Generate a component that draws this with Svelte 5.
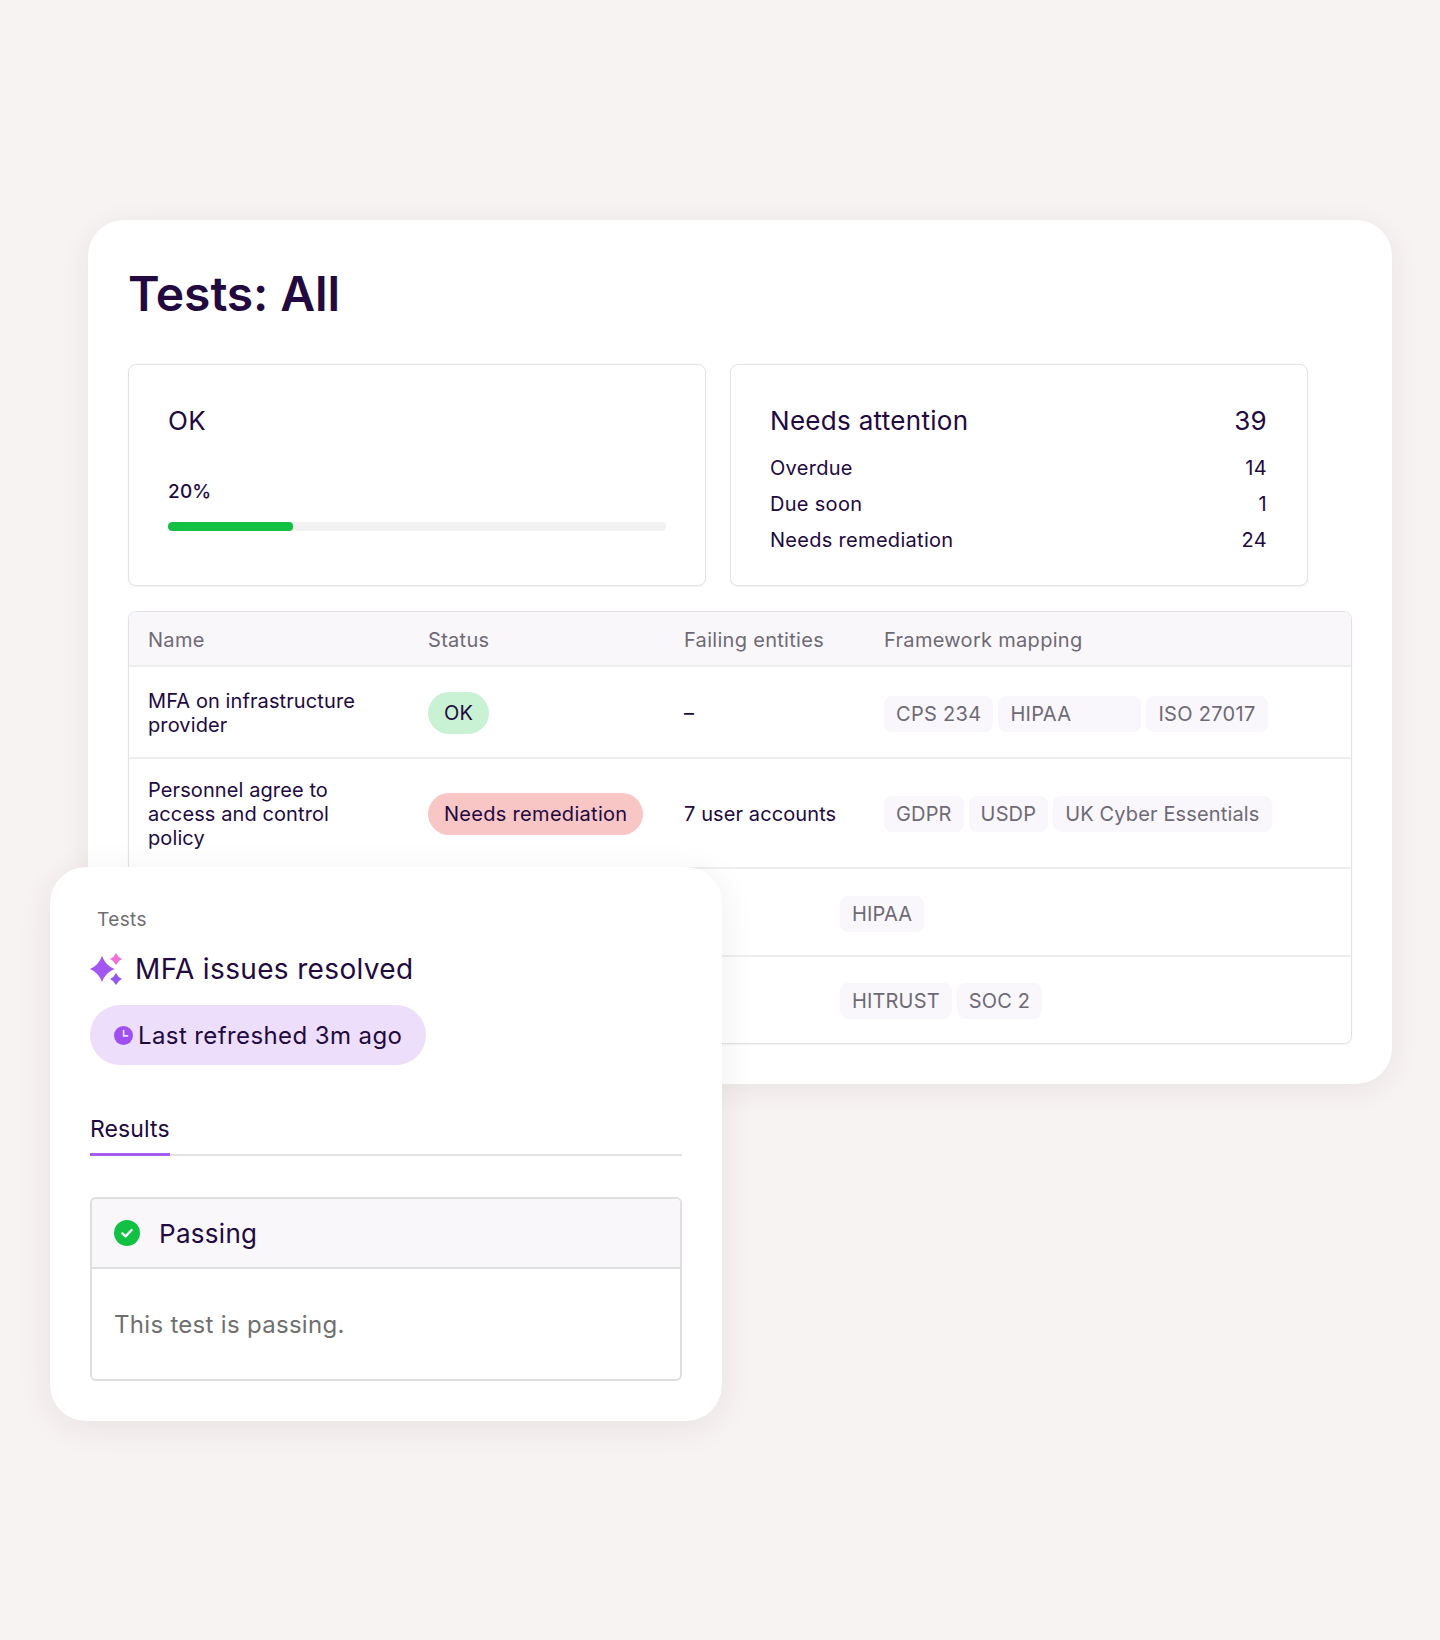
<script lang="ts">
  type Tag = { label: string; width?: number };
  type Row = {
    name: string[];
    status?: { label: string; tone: string };
    failing?: string;
    tags: Tag[];
    kind: string;
  };

  const attention = [
    { label: "Overdue", count: 14 },
    { label: "Due soon", count: 1 },
    { label: "Needs remediation", count: 24 },
  ];

  const rows: Row[] = [
    {
      name: ["MFA on infrastructure", "provider"],
      status: { label: "OK", tone: "ok" },
      failing: "–",
      tags: [{ label: "CPS 234" }, { label: "HIPAA", width: 143 }, { label: "ISO 27017" }],
      kind: "first",
    },
    {
      name: ["Personnel agree to", "access and control", "policy"],
      status: { label: "Needs remediation", tone: "bad" },
      failing: "7 user accounts",
      tags: [{ label: "GDPR" }, { label: "USDP" }, { label: "UK Cyber Essentials" }],
      kind: "second",
    },
    { name: [], tags: [{ label: "HIPAA" }], kind: "short" },
    { name: [], tags: [{ label: "HITRUST" }, { label: "SOC 2" }], kind: "short" },
  ];
</script>

<div class="page">
  <section class="main-card">
    <h1>Tests: All</h1>

    <div class="stats">
      <div class="stat">
        <div class="stat-title">OK</div>
        <div class="percent">20%</div>
        <div class="bar"><div class="bar-fill" style="width: 25%"></div></div>
      </div>
      <div class="stat wide-right">
        <div class="stat-title split"><span>Needs attention</span><span>39</span></div>
        <div class="attention">
          {#each attention as item}
            <div class="split"><span>{item.label}</span><span>{item.count}</span></div>
          {/each}
        </div>
      </div>
    </div>

    <div class="table">
      <div class="thead">
        <span>Name</span>
        <span>Status</span>
        <span>Failing entities</span>
        <span>Framework mapping</span>
      </div>
      {#each rows as row}
        <div class="row {row.kind}">
          {#if row.kind === "short"}
            <div class="tags">
              {#each row.tags as tag}
                <span class="tag">{tag.label}</span>
              {/each}
            </div>
          {:else}
            <div class="name">
              {#each row.name as line}<div>{line}</div>{/each}
            </div>
            <div><span class="pill {row.status?.tone}">{row.status?.label}</span></div>
            <div class="failing">{row.failing}</div>
            <div class="tags">
              {#each row.tags as tag}
                <span class="tag" style={tag.width ? `width: ${tag.width}px` : undefined}>{tag.label}</span>
              {/each}
            </div>
          {/if}
        </div>
      {/each}
    </div>
  </section>

  <section class="float-card">
    <div class="crumb">Tests</div>
    <div class="float-title">
      <svg width="34" height="34" viewBox="0 0 34 34" aria-hidden="true">
        <path d="M12 4 Q15.5 13.5 24.5 17 Q15.5 20.5 12 30 Q8.5 20.5 0 17 Q8.5 13.5 12 4Z" fill="#a356f2" />
        <path d="M26 1 Q27.8 5.2 32 7 Q27.8 8.8 26 13 Q24.2 8.8 20 7 Q24.2 5.2 26 1Z" fill="#ec72d8" />
        <path d="M26 21 Q27.8 25.2 32 27 Q27.8 28.8 26 33 Q24.2 28.8 20 27 Q24.2 25.2 26 21Z" fill="#9457ea" />
      </svg>
      <span>MFA issues resolved</span>
    </div>
    <div class="refresh">
      <svg width="19" height="19" viewBox="0 0 19 19" aria-hidden="true">
        <circle cx="9.5" cy="9.5" r="9.5" fill="#a04ff0" />
        <path d="M9.6 4.6V9.9H13.6" fill="none" stroke="#f0e0fd" stroke-width="1.7" stroke-linecap="round" stroke-linejoin="round" />
      </svg>
      <span>Last refreshed 3m ago</span>
    </div>

    <div class="tabs"><span class="tab">Results</span></div>

    <div class="result">
      <div class="result-head">
        <svg width="26" height="26" viewBox="0 0 26 26" aria-hidden="true">
          <circle cx="13" cy="13" r="13" fill="#12c143" />
          <path d="M8.4 13.4L11.6 16.4L17.6 10" fill="none" stroke="#fff" stroke-width="2.3" stroke-linecap="round" stroke-linejoin="round" />
        </svg>
        <span>Passing</span>
      </div>
      <div class="result-body">This test is passing.</div>
    </div>
  </section>
</div>

<style>
  :global(body) {
    margin: 0;
    background: #f7f3f2;
  }
  .page {
    position: relative;
    height: 1640px;
    padding-top: 220px;
    box-sizing: border-box;
    font-family: Inter, "Liberation Sans", sans-serif;
    color: #22093f;
    letter-spacing: 0.3px;
  }
  .main-card {
    margin-left: 88px;
    width: 1304px;
    box-sizing: border-box;
    padding: 46px 40px 40px;
    background: #fff;
    border-radius: 36px;
    box-shadow: 0 6px 30px rgba(60, 40, 40, 0.07);
  }
  h1 {
    margin: 0 0 42px;
    font-size: 48px;
    line-height: 56px;
    font-weight: 600;
    letter-spacing: -0.1px;
  }
  .stats {
    display: grid;
    grid-template-columns: 578px 578px;
    gap: 24px;
  }
  .stat {
    height: 222px;
    box-sizing: border-box;
    padding: 40px 39px;
    border: 1px solid #e3e2e4;
    border-radius: 8px;
    box-shadow: 0 1px 2px rgba(30, 20, 50, 0.06);
  }
  .stat.wide-right {
    padding-right: 40px;
  }
  .stat-title {
    font-size: 26px;
    line-height: 32px;
    font-weight: 400;
  }
  .split {
    display: flex;
    justify-content: space-between;
  }
  .percent {
    margin-top: 43px;
    font-size: 19px;
    line-height: 24px;
    font-weight: 500;
    letter-spacing: 0.2px;
  }
  .bar {
    margin-top: 18px;
    height: 9px;
    border-radius: 4px;
    background: #f2f2f2;
    overflow: hidden;
  }
  .bar-fill {
    height: 100%;
    border-radius: 4px;
    background: #12c143;
  }
  .attention {
    margin-top: 19px;
    display: flex;
    flex-direction: column;
    gap: 12px;
    font-size: 20px;
    line-height: 24px;
  }
  .table {
    margin-top: 25px;
    border: 1px solid #e3e2e4;
    border-radius: 8px;
    overflow: hidden;
    font-size: 20px;
    line-height: 24px;
    box-shadow: 0 1px 2px rgba(30, 20, 50, 0.06);
  }
  .thead,
  .row.first,
  .row.second {
    display: grid;
    grid-template-columns: 280px 256px 200px 1fr;
    align-items: center;
    padding-left: 19px;
  }
  .thead {
    box-sizing: border-box;
    height: 55px;
    padding-top: 2px;
    background: #faf7fb;
    color: #6e6a75;
    border-bottom: 2px solid #eeedef;
  }
  .row {
    box-sizing: border-box;
    border-bottom: 2px solid #eeedef;
  }
  .row.first {
    height: 92px;
    padding-top: 1px;
  }
  .row.first .tags {
    margin-top: 2px;
  }
  .row.second {
    height: 110px;
    padding-top: 2px;
  }
  .row.short {
    display: flex;
    align-items: center;
    height: 88px;
    padding-top: 3px;
    padding-left: 711px;
  }
  .row.short:last-child {
    height: 86px;
    padding-top: 1px;
    border-bottom: 0;
  }
  .name,
  .failing {
    letter-spacing: 0.1px;
  }
  .pill {
    display: inline-block;
    padding: 0 16px;
    height: 42px;
    line-height: 42px;
    border-radius: 21px;
  }
  .pill.ok {
    background: #c9f2d5;
  }
  .pill.bad {
    background: #f9c6c6;
  }
  .tags {
    display: flex;
    gap: 5px;
  }
  .tag {
    box-sizing: border-box;
    height: 36px;
    line-height: 36px;
    padding: 0 12px;
    border-radius: 8px;
    background: #f9f7fb;
    color: #6e6a75;
  }
  .row.second .tag,
  .row.short .tag {
    letter-spacing: 0.15px;
  }
  .float-card {
    position: absolute;
    left: 50px;
    top: 867px;
    width: 672px;
    box-sizing: border-box;
    padding: 40px;
    background: #fff;
    border-radius: 36px;
    box-shadow: 0 6px 34px rgba(60, 40, 40, 0.08);
  }
  .crumb {
    margin-left: 7px;
    font-size: 19px;
    line-height: 26px;
    color: #6f6f6f;
    letter-spacing: 0.4px;
  }
  .float-title {
    margin-top: 18px;
    display: flex;
    align-items: center;
    gap: 11px;
    font-size: 28px;
    line-height: 36px;
    letter-spacing: 0.35px;
  }
  .refresh {
    margin-top: 18px;
    display: inline-flex;
    align-items: center;
    gap: 5px;
    height: 60px;
    padding: 0 24px;
    border-radius: 30px;
    background: #eddffc;
    font-size: 24px;
    letter-spacing: 0.4px;
  }
  .tabs {
    margin-top: 50px;
    border-bottom: 2px solid #e2e0e4;
    height: 39px;
  }
  .tab {
    display: inline-block;
    height: 41px;
    box-sizing: border-box;
    font-size: 23px;
    line-height: 28px;
    letter-spacing: 0.1px;
    border-bottom: 3px solid #a65cf0;
  }
  .result {
    margin-top: 41px;
    border: 2px solid #dfdee1;
    border-radius: 6px;
    overflow: hidden;
  }
  .result-head {
    box-sizing: border-box;
    display: flex;
    align-items: center;
    gap: 19px;
    height: 70px;
    padding-left: 22px;
    background: #faf7fb;
    border-bottom: 2px solid #dfdee1;
    font-size: 26px;
  }
  .result-body {
    padding: 40px 22px 38px;
    font-size: 24px;
    line-height: 32px;
    color: #6f6f6f;
  }
</style>
